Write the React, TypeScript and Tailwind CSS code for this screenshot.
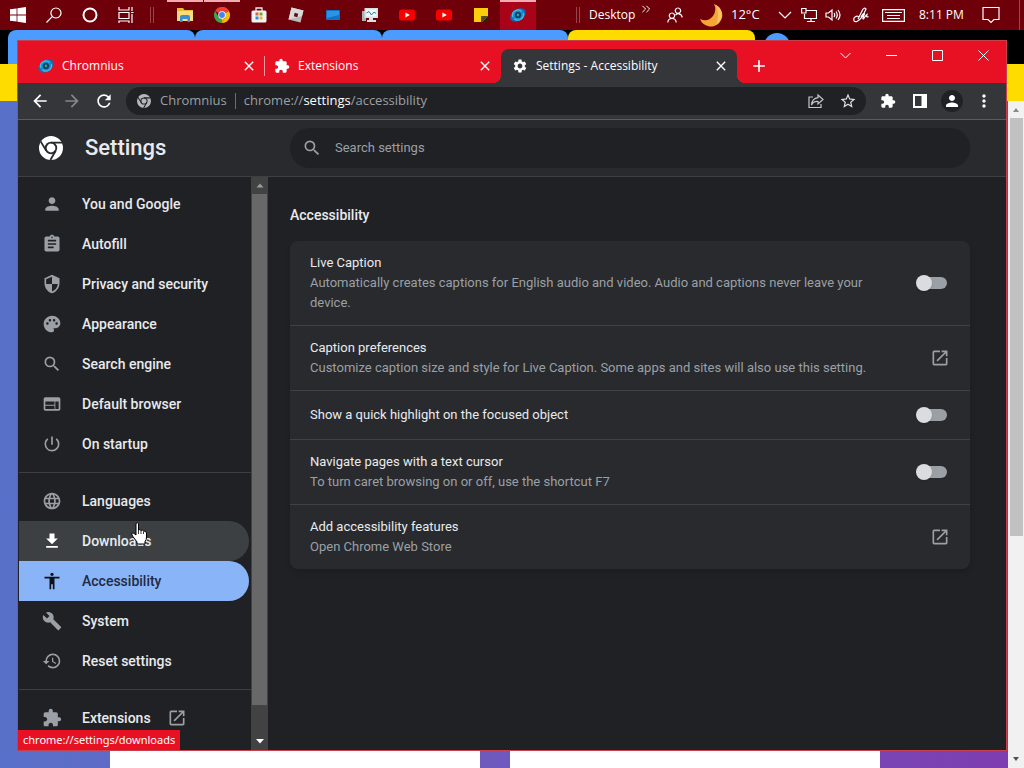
import type { ReactNode } from "react";
import type { IconType } from "react-icons";
import {
    MdAccessibility,
    MdAdd,
    MdArrowBack,
    MdArrowForward,
    MdAssignment,
    MdBuild,
    MdClose,
    MdExtension,
    MdFileDownload,
    MdHistory,
    MdLanguage,
    MdMoreVert,
    MdOpenInNew,
    MdPalette,
    MdPerson,
    MdPowerSettingsNew,
    MdRefresh,
    MdSearch,
    MdSecurity,
    MdSettings,
    MdStarOutline,
    MdWeb,
} from "react-icons/md";

interface NavItem {
    label: string;
    icon: IconType;
    state?: "hover" | "selected";
    external?: boolean;
}

interface SettingRow {
    title: string;
    description?: string;
    kind: "toggle" | "link";
}

const navGroups: NavItem[][] = [
    [
        { label: "You and Google", icon: MdPerson },
        { label: "Autofill", icon: MdAssignment },
        { label: "Privacy and security", icon: MdSecurity },
        { label: "Appearance", icon: MdPalette },
        { label: "Search engine", icon: MdSearch },
        { label: "Default browser", icon: MdWeb },
        { label: "On startup", icon: MdPowerSettingsNew },
    ],
    [
        { label: "Languages", icon: MdLanguage },
        { label: "Downloads", icon: MdFileDownload, state: "hover" },
        { label: "Accessibility", icon: MdAccessibility, state: "selected" },
        { label: "System", icon: MdBuild },
        { label: "Reset settings", icon: MdHistory },
    ],
    [{ label: "Extensions", icon: MdExtension, external: true }],
];

const rows: SettingRow[] = [
    {
        title: "Live Caption",
        description:
            "Automatically creates captions for English audio and video. Audio and captions never leave your device.",
        kind: "toggle",
    },
    {
        title: "Caption preferences",
        description: "Customize caption size and style for Live Caption. Some apps and sites will also use this setting.",
        kind: "link",
    },
    { title: "Show a quick highlight on the focused object", kind: "toggle" },
    {
        title: "Navigate pages with a text cursor",
        description: "To turn caret browsing on or off, use the shortcut F7",
        kind: "toggle",
    },
    { title: "Add accessibility features", description: "Open Chrome Web Store", kind: "link" },
];

/* ---------- drawings ---------- */

const ChromeMono = ({ className, gap }: { className: string; gap: string }) => (
    <svg viewBox="0 0 24 24" className={className} aria-hidden="true">
        <circle cx="12" cy="12" r="12" fill="currentColor" />
        <circle cx="12" cy="12" r="6.2" fill={gap} />
        <circle cx="12" cy="12" r="4.4" fill="currentColor" />
        <path d="M12 6.6H23M7.3 14.7L1.6 5.4M16.7 14.7L11.4 24" stroke={gap} strokeWidth="1.8" fill="none" />
    </svg>
);

const ChromeColor = () => (
    <svg viewBox="0 0 24 24" className="size-4" aria-hidden="true">
        <path d="M12 12L1.6 6A12 12 0 0 1 22.4 6Z" fill="#ea4335" />
        <path d="M12 12V0A12 12 0 0 1 22.4 6H12Z" fill="#ea4335" />
        <path d="M12 12L22.4 6A12 12 0 0 1 12 24L17 15Z" fill="#fbbc05" />
        <path d="M12 12L12 24A12 12 0 0 1 1.6 6L7 15Z" fill="#34a853" />
        <path d="M12 12L17 15L12 24Z" fill="#fbbc05" />
        <circle cx="12" cy="12" r="5.6" fill="#fff" />
        <circle cx="12" cy="12" r="4.4" fill="#4285f4" />
    </svg>
);

const ChromniusLogo = () => (
    <svg viewBox="0 0 16 16" className="size-4" aria-hidden="true">
        <ellipse cx="8" cy="8" rx="8.500" ry="5.600" transform="rotate(-35 8 8)" fill="#1769b5" />
        <ellipse cx="8" cy="8" rx="6.500" ry="5.500" transform="rotate(-35 8 8)" fill="#1b87c9" />
        <path d="M2.6 9.8A5.6 5.6 0 0 1 11.6 4.2M13.4 6.2A5.6 5.6 0 0 1 4.4 11.8" stroke="#3fc0ea" strokeWidth="1.3" fill="none" />
        <circle cx="8" cy="8" r="3" fill="#0b3b5c" />
        <circle cx="8" cy="8" r="1.4" fill="#3b9a9c" />
    </svg>
);

const WindowsLogo = () => (
    <svg viewBox="0 0 16 16" className="size-4" fill="#fff" aria-hidden="true">
        <path d="M0 2.3L6.6 1.4V7.6H0ZM7.4 1.3L16 0V7.6H7.4ZM0 8.4H6.6V14.6L0 13.7ZM7.4 8.4H16V16L7.4 14.7Z" />
    </svg>
);

const Line = ({ d, className = "size-4", box = "0 0 16 16" }: { d: string; className?: string; box?: string }) => (
    <svg viewBox={box} className={className} fill="none" stroke="currentColor" strokeWidth="1.2" aria-hidden="true">
        <path d={d} />
    </svg>
);

const Explorer = () => (
    <svg viewBox="0 0 16 16" className="size-4" aria-hidden="true">
        <path d="M0 1H6L7.5 3H16V14H0Z" fill="#e9b93a" />
        <path d="M0 4H16V14H0Z" fill="#fbdc7b" />
        <path d="M3 15V10Q3 8 5 8H11Q13 8 13 10V15H10.500V12H5.500V15Z" fill="#3a8fd0" />
    </svg>
);

const Store = () => (
    <svg viewBox="0 0 16 16" className="size-4" aria-hidden="true">
        <path d="M5 4V1H11V4" fill="none" stroke="#e8e8e8" strokeWidth="1.3" />
        <rect x="0.500" y="3.500" width="15" height="12" rx="1.500" fill="#f3f3f3" />
        <path d="M4.500 5.500h3v3h-3z" fill="#e2603a" />
        <path d="M8.500 5.500h3v3h-3z" fill="#75a82d" />
        <path d="M4.500 9.500h3v3h-3z" fill="#2f8fd6" />
        <path d="M8.500 9.500h3v3h-3z" fill="#e9b52f" />
    </svg>
);

const Roblox = () => (
    <svg viewBox="0 0 16 16" className="size-4" aria-hidden="true">
        <path d="M3.500 0.500L15.500 3.500L12.500 15.500L0.500 12.500Z" fill="#b9b9b9" />
        <path d="M3.500 0.500L15.500 3.500L14 9L0.500 12.500Z" fill="#dadada" />
        <path d="M6.700 5.800L10.200 6.700L9.300 10.200L5.800 9.300Z" fill="#5c1115" />
    </svg>
);

const BluePc = () => (
    <svg viewBox="0 0 16 16" className="size-4" aria-hidden="true">
        <rect x="1" y="3" width="14" height="10" rx="1" fill="#1173c7" />
        <path d="M2 4H14V8L2 11Z" fill="#2a94e6" />
    </svg>
);

const Monitor = () => (
    <svg viewBox="0 0 16 16" className="size-4" aria-hidden="true">
        <path d="M0 4H4V14H0Z" fill="#a9b4b6" />
        <path d="M2.500 1H16V11H2.500ZM7 11H11V13H14V15H5V13H7Z" fill="#d7dfe0" />
        <path d="M4 2.500H14.500V9.500H4Z" fill="#eef8fb" />
        <path d="M4.500 6L7 4.500L9.500 8L12 5L14 6.500" stroke="#2a7e9b" fill="none" />
    </svg>
);

const YouTube = () => (
    <svg viewBox="0 0 16 16" className="size-4" aria-hidden="true">
        <rect x="0" y="2.500" width="16" height="11" rx="2.500" fill="#f60002" />
        <path d="M6.400 5.500L10.800 8L6.400 10.500Z" fill="#fff" />
    </svg>
);

const Sticky = () => (
    <svg viewBox="0 0 16 16" className="size-4" aria-hidden="true">
        <path d="M1 1H15V15H1Z" fill="#fbcf0c" />
        <path d="M8 9H15L9 15H8Z" fill="#5b4a12" />
        <path d="M15 9V15H9Z" fill="#2c2410" />
    </svg>
);

const HandCursor = () => (
    <svg viewBox="0 0 17 23" className="h-[23px] w-[17px]" aria-hidden="true">
        <path
            d="M5 1.500Q6.500 0 7.500 1.500V8Q9 7 10 8.400Q11.500 7.600 12.500 9Q15 8.600 15.500 11V15Q15.500 18 14 19.500V22H6V20L1.500 14Q0 11.500 1.200 11Q2.500 10.500 5 13Z"
            fill="#fff"
            stroke="#000"
        />
        <path d="M7.500 8V12M10 8.500V12M12.500 9.500V12" stroke="#000" strokeWidth="0.800" />
    </svg>
);

/* ---------- taskbar ---------- */

const TaskButton = ({ label, mark, children }: { label: string; mark?: "open" | "active"; children: ReactNode }) => (
    <button
        aria-label={label}
        className={`flex h-full w-9 shrink-0 items-center justify-center border-y-2 border-b-transparent ${
            mark === "active"
                ? "border-t-[#f4aab2] bg-[#a9031a]"
                : mark === "open"
                  ? "border-t-[#f4aab2]"
                  : "border-t-transparent"
        }`}
    >
        {children}
    </button>
);

const Taskbar = () => (
    <header className="flex h-[30px] shrink-0 items-center bg-[#6e0009] font-['Open_Sans','Noto_Sans',sans-serif] text-xs text-white">
        <TaskButton label="Start">
            <WindowsLogo />
        </TaskButton>
        <TaskButton label="Search">
            <Line d="M10 1A5 5 0 1 1 9.900 1M6.200 9.600L0.500 15.500" />
        </TaskButton>
        <TaskButton label="Cortana">
            <svg viewBox="0 0 16 16" className="size-4" aria-hidden="true">
                <circle cx="8" cy="8" r="6.500" fill="none" stroke="#fff" strokeWidth="2" />
            </svg>
        </TaskButton>
        <TaskButton label="Task view">
            <Line d="M1 0V3H11V0M1 5.500H11V11.500H1ZM1 16V14H11V16M14 0V4M14 7V16M13 5.500H15.500" />
        </TaskButton>
        <span className="mx-[6px] h-4 w-1 border-x border-[#98444a]" />
        <nav aria-label="Pinned apps" className="ml-[7px] flex h-full gap-px">
            <TaskButton label="File Explorer" mark="open">
                <Explorer />
            </TaskButton>
            <TaskButton label="Chrome" mark="open">
                <ChromeColor />
            </TaskButton>
            <TaskButton label="Store">
                <Store />
            </TaskButton>
            <TaskButton label="Roblox">
                <Roblox />
            </TaskButton>
            <TaskButton label="This PC">
                <BluePc />
            </TaskButton>
            <TaskButton label="Monitor">
                <Monitor />
            </TaskButton>
            <TaskButton label="YouTube">
                <YouTube />
            </TaskButton>
            <TaskButton label="YouTube Studio">
                <YouTube />
            </TaskButton>
            <TaskButton label="Sticky Notes">
                <Sticky />
            </TaskButton>
            <TaskButton label="Chromnius" mark="active">
                <ChromniusLogo />
            </TaskButton>
        </nav>
        <div className="ml-auto flex h-full items-center">
            <span className="mr-[9px] h-4 w-1 border-x border-[#98444a]" />
            <button className="w-[52px] text-left">Desktop</button>
            <button aria-label="More" className="mr-4 self-start pt-[5px]">
                <Line d="M1 1L5 5L1 9M6 1L10 5L6 9" box="0 0 11 10" className="h-2 w-[10px]" />
            </button>
            <button aria-label="People" className="w-8">
                <Line d="M11 1A2.700 2.700 0 1 1 10.900 1M5 6A2.700 2.700 0 1 1 4.900 6M0.800 15.500Q1 11.500 5 11.500Q9 11.500 9.200 15.500M8.500 8Q10 6.500 12 6.800Q15 7.500 15.200 10.500" />
            </button>
            <button className="mr-3 flex items-center gap-2">
                <svg viewBox="0 0 24 24" className="size-6" aria-hidden="true">
                    <path d="M15 1A11.500 11.500 0 1 1 1 16Q9 19.500 14 13Q18 7 15 1Z" fill="#f6a436" />
                    <path d="M17 2A11.500 11.500 0 0 1 22 16Q20 20 17 21.500Q21 12 17 2Z" fill="#ffc165" />
                </svg>
                <span className="w-[34px] whitespace-nowrap text-left text-[13px]">12°C</span>
            </button>
            <button aria-label="Show hidden icons" className="w-6">
                <Line d="M2 5L8 11L14 5" />
            </button>
            <button aria-label="Network" className="w-6">
                <Line d="M5 3.500H15.500V11.500H3.500V7M10 11.500V14.500M6 14.500H14M0.600 1.500H5V6H0.600Z" />
            </button>
            <button aria-label="Volume" className="w-6">
                <Line d="M1 6H3.500L7 3V13L3.500 10H1ZM9 6Q10.500 8 9 10M11 4.500Q13.500 8 11 11.500M13 3Q17 8 13 13" />
            </button>
            <button aria-label="Pen" className="w-7 pl-1">
                <Line d="M1 11Q0 15.500 4 14.500Q9 12 13 2Q11 0 9.500 3L5 12M1 11Q3 8.500 5.500 9.500M8 10Q11 5 11.500 7Q9 12 10.500 12Q13 8 14 7.500Q12.500 11 15.500 9.500" />
            </button>
            <button aria-label="Touch keyboard" className="mr-[14px] w-7 pl-[5px]">
                <Line
                    d="M0.600 0.600H22.400V12.400H0.600ZM3 3.500H20M5 6.500H18M5 9.500H18"
                    box="0 0 23 13"
                    className="h-[13px] w-[23px]"
                />
            </button>
            <time className="w-[46px] whitespace-nowrap">8:11 PM</time>
            <button aria-label="Notifications" className="mx-[17px] w-5">
                <Line d="M1 1.500H17V13.500H12L9 16.500L6 13.500H1Z" box="0 0 18 18" className="size-[18px]" />
            </button>
            <span className="mr-1 h-full w-px bg-[#a2444b]" />
        </div>
    </header>
);

/* ---------- window at the back ---------- */

const BackWindow = () => (
    <div className="flex min-h-0 flex-1 flex-col bg-black">
        <div className="flex h-[34px] shrink-0 items-stretch pl-2">
            <div className="w-[187px] rounded-t-lg bg-[#4c9bff]" />
            <div className="w-[187px] rounded-t-lg bg-[#4c9bff]" />
            <div className="w-[186px] rounded-t-lg bg-[#4c9bff]" />
            <div className="w-[187px] rounded-t-lg bg-[#ffdc00]" />
            <div className="ml-[9px] mt-[3px] size-[26px] rounded-full bg-[#4c9bff]" />
        </div>
        <div className="h-[37px] shrink-0 bg-[#ffdc00]" />
        <div className="flex min-h-0 flex-1">
            <div className="flex flex-1 gap-[30px] bg-linear-to-r from-[#5870c9] to-[#7d3db1] pl-[110px] pr-[128px]">
                <div className="flex-1 bg-white" />
                <div className="flex-1 bg-white" />
            </div>
            <div className="flex w-4 flex-col items-center bg-[#f1f1f1]">
                <svg viewBox="0 0 16 17" className="h-[17px] w-4 shrink-0" aria-hidden="true">
                    <path d="M5 11L8 7L11 11Z" fill="#8b8b8b" />
                </svg>
                <div className="h-[418px] w-[13px] bg-[#c1c1c1]" />
                <svg viewBox="0 0 16 17" className="mt-auto h-[17px] w-4 shrink-0" aria-hidden="true">
                    <path d="M5 6L11 6L8 10Z" fill="#505050" />
                </svg>
            </div>
        </div>
    </div>
);

/* ---------- browser window ---------- */

const Tab = ({ title, icon, active, divider }: { title: string; icon: ReactNode; active?: boolean; divider?: boolean }) => (
    <div
        className={`relative flex h-[34px] max-w-[236px] flex-1 items-center pr-2 ${
            active
                ? "rounded-t-lg bg-[#35363a] pl-[11px] before:absolute before:-left-2 before:bottom-0 before:size-2 before:bg-[radial-gradient(circle_at_0_0,transparent_8px,#35363a_8px)] after:absolute after:-right-2 after:bottom-0 after:size-2 after:bg-[radial-gradient(circle_at_100%_0,transparent_8px,#35363a_8px)]"
                : "pl-[9px]"
        }`}
    >
        {icon}
        <a href="#tab" className="ml-2 flex-1 truncate">
            {title}
        </a>
        <button aria-label={`Close ${title}`}>
            <MdClose className="size-4" />
        </button>
        {divider && <span className="absolute right-0 h-5 w-px bg-[#f59aa2]" />}
    </div>
);

const WindowControl = ({ label, d }: { label: string; d: string }) => (
    <button aria-label={label} className="flex h-7 w-[46px] items-center justify-center">
        <svg viewBox="0 0 11 11" className="size-[11px]" fill="none" stroke="#fff" aria-hidden="true">
            <path d={d} />
        </svg>
    </button>
);

const TabStrip = () => (
    <div className="flex h-[42px] shrink-0 items-end bg-[#e81123] pl-[11px] text-xs text-white">
        <Tab title="Chromnius" icon={<ChromniusLogo />} divider />
        <Tab title="Extensions" icon={<MdExtension className="size-4" />} />
        <Tab title="Settings - Accessibility" icon={<MdSettings className="size-4" />} active />
        <button aria-label="New tab" className="ml-3 flex h-[34px] w-5 items-center justify-center">
            <MdAdd className="size-5" />
        </button>
        <div className="ml-auto flex self-start">
            <WindowControl label="Search tabs" d="M0.500 3L5.500 8L10.500 3" />
            <WindowControl label="Minimize" d="M0 5.500H11" />
            <WindowControl label="Maximize" d="M0.500 0.500H10.500V10.500H0.500Z" />
            <WindowControl label="Close" d="M0.500 0.500L10.500 10.500M10.500 0.500L0.500 10.500" />
        </div>
    </div>
);

const ToolButton = ({ label, className = "", children }: { label: string; className?: string; children: ReactNode }) => (
    <button aria-label={label} className={`flex w-8 shrink-0 items-center justify-center ${className}`}>
        {children}
    </button>
);

const Toolbar = () => (
    <div className="flex h-[37px] shrink-0 items-center border-b border-[#5b5c5f] bg-[#35363a] px-[6px] text-white">
        <ToolButton label="Back">
            <MdArrowBack className="size-5" />
        </ToolButton>
        <ToolButton label="Forward" className="text-[#86878a]">
            <MdArrowForward className="size-5" />
        </ToolButton>
        <ToolButton label="Reload">
            <MdRefresh className="size-5" />
        </ToolButton>
        <div className="mx-[6px] flex h-7 flex-1 items-center rounded-full bg-[#202124] pl-[11px] pr-[2px] text-[13px] text-[#9aa0a6]">
            <ChromeMono className="size-[14px] text-[#b4b7bb]" gap="#202124" />
            <span className="ml-[9px]">Chromnius</span>
            <span className="mx-2 h-4 w-px bg-[#6b6e72]" />
            <div
                role="textbox"
                aria-label="Address bar"
                contentEditable
                suppressContentEditableWarning
                className="flex-1 whitespace-nowrap"
            >
                chrome://<span className="text-white">settings</span>/accessibility
            </div>
            <ToolButton label="Share">
                <Line
                    d="M5 4H1V14.500H13V11M10 2L15 6.500L10 11V8.500Q5.500 8 3.500 12Q4 5.500 10 4.700Z"
                    className="size-4 text-[#c5c8cb]"
                />
            </ToolButton>
            <ToolButton label="Bookmark">
                <MdStarOutline className="size-[18px] text-[#dfe1e4]" />
            </ToolButton>
        </div>
        <ToolButton label="Extensions">
            <MdExtension className="size-4" />
        </ToolButton>
        <ToolButton label="Side panel">
            <svg viewBox="0 0 14 14" className="size-[14px]" aria-hidden="true">
                <path d="M0 0H14V14H0ZM2 2V12H8.500V2Z" fill="#fff" fillRule="evenodd" />
            </svg>
        </ToolButton>
        <ToolButton label="Profile">
            <span className="flex size-[22px] items-center justify-center rounded-full bg-[#202124]">
                <MdPerson className="size-[18px]" />
            </span>
        </ToolButton>
        <ToolButton label="Menu">
            <MdMoreVert className="size-5" />
        </ToolButton>
    </div>
);

const NavLink = ({ item }: { item: NavItem }) => {
    const Icon = item.icon;
    const look =
        item.state === "selected"
            ? "bg-[#8ab4f8] text-[#202a44]"
            : item.state === "hover"
              ? "bg-[#3c4043] text-[#e8eaed]"
              : "text-[#e8eaed]";
    const iconLook =
        item.state === "selected" ? "text-[#101114]" : item.state === "hover" ? "text-white" : "text-[#9aa0a6]";

    return (
        <li>
            <a href="#nav" className={`mr-[2px] flex h-10 items-center rounded-r-full pl-[23px] ${look}`}>
                <Icon className={`size-5 shrink-0 ${iconLook}`} />
                <span className="ml-5">{item.label}</span>
                {item.external && <MdOpenInNew className="ml-4 size-5 text-[#9aa0a6]" />}
            </a>
        </li>
    );
};

const Sidebar = () => (
    <div className="flex w-[250px] shrink-0">
        <nav aria-label="Settings" className="min-w-0 flex-1 overflow-hidden pl-px pt-[7px] text-sm font-medium">
            {navGroups.map((group, i) => (
                <ul key={i} className={i > 0 ? "mt-2 border-t border-[#3c4043] pt-2" : ""}>
                    {group.map((item) => (
                        <NavLink key={item.label} item={item} />
                    ))}
                </ul>
            ))}
        </nav>
        <div className="flex w-[17px] flex-col items-center bg-[#424242]">
            <svg viewBox="0 0 16 17" className="h-[17px] w-4 shrink-0" aria-hidden="true">
                <path d="M4.500 10.500L8 6.500L11.500 10.500Z" fill="#9b9b9b" />
            </svg>
            <div className="w-[15px] flex-1 bg-[#686868]" />
            <svg viewBox="0 0 16 17" className="mt-7 h-[17px] w-4 shrink-0" aria-hidden="true">
                <path d="M4 6L12 6L8 10.500Z" fill="#fff" />
            </svg>
        </div>
    </div>
);

const Row = ({ row }: { row: SettingRow }) => {
    const text = (
        <span className="max-w-[560px] leading-5">
            <span className="block text-[#e8eaed]">{row.title}</span>
            {row.description && <span className="block text-[#9aa0a6]">{row.description}</span>}
        </span>
    );

    if (row.kind === "link") {
        return (
            <a href="#open" className="flex min-h-[49px] items-center justify-between px-5 py-3">
                {text}
                <MdOpenInNew className="size-5 shrink-0 text-[#9aa0a6]" />
            </a>
        );
    }

    return (
        <label className="flex min-h-[49px] items-center justify-between py-3 pl-5 pr-[23px]">
            {text}
            <input
                type="checkbox"
                className="flex h-3 w-7 shrink-0 appearance-none items-center rounded-full bg-[#9aa0a6] before:-ml-[3px] before:size-4 before:shrink-0 before:rounded-full before:bg-[#dadce0] before:shadow-sm"
            />
        </label>
    );
};

const SettingsPage = () => (
    <div className="flex min-h-0 flex-1 flex-col bg-[#202124] font-['Roboto',sans-serif]">
        <header className="flex h-[57px] shrink-0 items-center border-b border-[#3c4043] bg-[#292a2d] pb-px pl-[21px] pr-9">
            <ChromeMono className="size-6 text-white" gap="#292a2d" />
            <h1 className="ml-[22px] w-[205px] shrink-0 text-[22px] font-medium leading-7 text-[#e8eaed]">Settings</h1>
            <label className="flex h-10 max-w-[680px] flex-1 items-center rounded-full bg-[#202124] pl-3">
                <MdSearch className="size-5 text-[#9aa0a6]" />
                <input
                    type="search"
                    placeholder="Search settings"
                    aria-label="Search settings"
                    className="ml-[13px] flex-1 bg-transparent text-[13px] text-white outline-none placeholder:text-[#9aa0a6]"
                />
            </label>
        </header>
        <div className="flex min-h-0 flex-1">
            <Sidebar />
            <main className="flex-1 overflow-hidden pl-[22px] pr-9 pt-7">
                <h2 className="text-sm font-medium leading-5 text-[#e8eaed]">Accessibility</h2>
                <section className="mt-4 max-w-[680px] divide-y divide-[#3f4144] rounded-lg bg-[#292a2d] text-[13px] shadow-md">
                    {rows.map((row) => (
                        <Row key={row.title} row={row} />
                    ))}
                </section>
            </main>
        </div>
    </div>
);

export default function App() {
    return (
        <div className="flex h-screen flex-col overflow-hidden">
            <Taskbar />
            <div className="relative flex min-h-0 flex-1 flex-col">
                <BackWindow />
                <div className="absolute inset-x-[17px] bottom-[17px] top-[10px] flex flex-col border border-[#c8404c] font-['Open_Sans','Noto_Sans',sans-serif]">
                    <TabStrip />
                    <Toolbar />
                    <SettingsPage />
                    <output className="absolute bottom-0 left-0 bg-[#e81123] px-[5px] font-['Noto_Sans',sans-serif] text-[11px] leading-5 text-white">
                        chrome://settings/downloads
                    </output>
                    <div className="absolute left-[113px] top-[481px]">
                        <HandCursor />
                    </div>
                </div>
            </div>
        </div>
    );
}
